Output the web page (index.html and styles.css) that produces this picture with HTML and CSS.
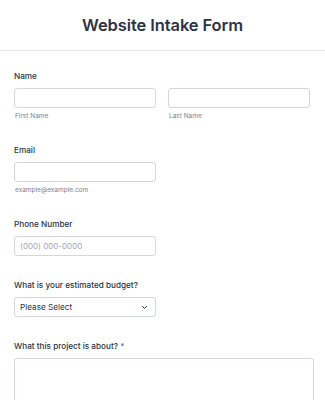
FILE: index.html
```html
<!DOCTYPE html>
<html lang="en">
<head>
    <meta charset="UTF-8">
    <meta name="viewport" content="width=device-width, initial-scale=1.0">
    <title>Website Intake Form</title>
    <link rel="stylesheet" href="styles.css">
</head>
<body>
    <header class="form-header">
        <h1>Website Intake Form</h1>
    </header>

    <form class="form-body" onsubmit="return false;">
        <div class="field">
            <label class="field-label">Name</label>
            <div class="field-row">
                <div class="field-col">
                    <input class="input half" type="text">
                    <span class="sublabel">First Name</span>
                </div>
                <div class="field-col">
                    <input class="input half" type="text">
                    <span class="sublabel">Last Name</span>
                </div>
            </div>
        </div>

        <div class="field">
            <label class="field-label">Email</label>
            <input class="input half" type="email">
            <span class="sublabel">example@example.com</span>
        </div>

        <div class="field">
            <label class="field-label">Phone Number</label>
            <input class="input half" type="tel" placeholder="(000) 000-0000">
        </div>

        <div class="field">
            <label class="field-label">What is your estimated budget?</label>
            <div class="select half">
                <span>Please Select</span>
                <svg width="7" height="5" viewBox="0 0 7 5"><path d="M1.3 1.3 L3.5 3.4 L5.7 1.3" fill="none" stroke="#2c3345" stroke-width="1" stroke-linecap="round" stroke-linejoin="round"/></svg>
            </div>
        </div>

        <div class="field">
            <label class="field-label">What this project is about? <span class="req">*</span></label>
            <textarea class="input textarea"></textarea>
        </div>
    </form>
</body>
</html>
```

FILE: styles.css
```css
:root {
    --texto: #2c3345;
    --texto-sub: #7a8092;
    --borda: #d3d6e0;
    --linha: #e3e5ec;
    --placeholder: #a0a6b8;
}
* { box-sizing: border-box; margin: 0; padding: 0; }
body {
    font-family: Inter, "Liberation Sans", Arial, sans-serif;
    color: var(--texto);
    background: #fff;
}
.form-header {
    height: 51px;
    border-bottom: 1px solid var(--linha);
    display: flex; align-items: center; justify-content: center;
}
.form-header h1 { font-size: 16.5px; font-weight: 600; letter-spacing: -0.1px; }
.form-body { padding: 19px 14px 0 14px; }
.field { margin-bottom: 23px; }
.field-label {
    display: block; font-size: 8.2px; font-weight: 500; line-height: 12px;
    margin-bottom: 6px;
}
.req { color: #57647e; font-weight: 400; }
.field-row { display: flex; gap: 12px; }
.field-col { display: flex; flex-direction: column; }
.input {
    display: block; height: 20px; border: 1px solid var(--borda); border-radius: 3px;
    font-family: inherit; font-size: 8px; color: var(--texto); padding: 0 5px; outline: none;
}
.input::placeholder { color: var(--placeholder); }
.half { width: 142px; }
.sublabel {
    display: block; font-size: 6.5px; line-height: 10px; color: var(--texto-sub);
    padding-left: 1px; padding-top: 3px;
}
.select {
    height: 20px; border: 1px solid var(--borda); border-radius: 3px;
    display: flex; align-items: center; justify-content: space-between;
    padding: 0 7px 0 5px; font-size: 8.2px;
}
.textarea { width: 300px; height: 60px; resize: none; }
```
